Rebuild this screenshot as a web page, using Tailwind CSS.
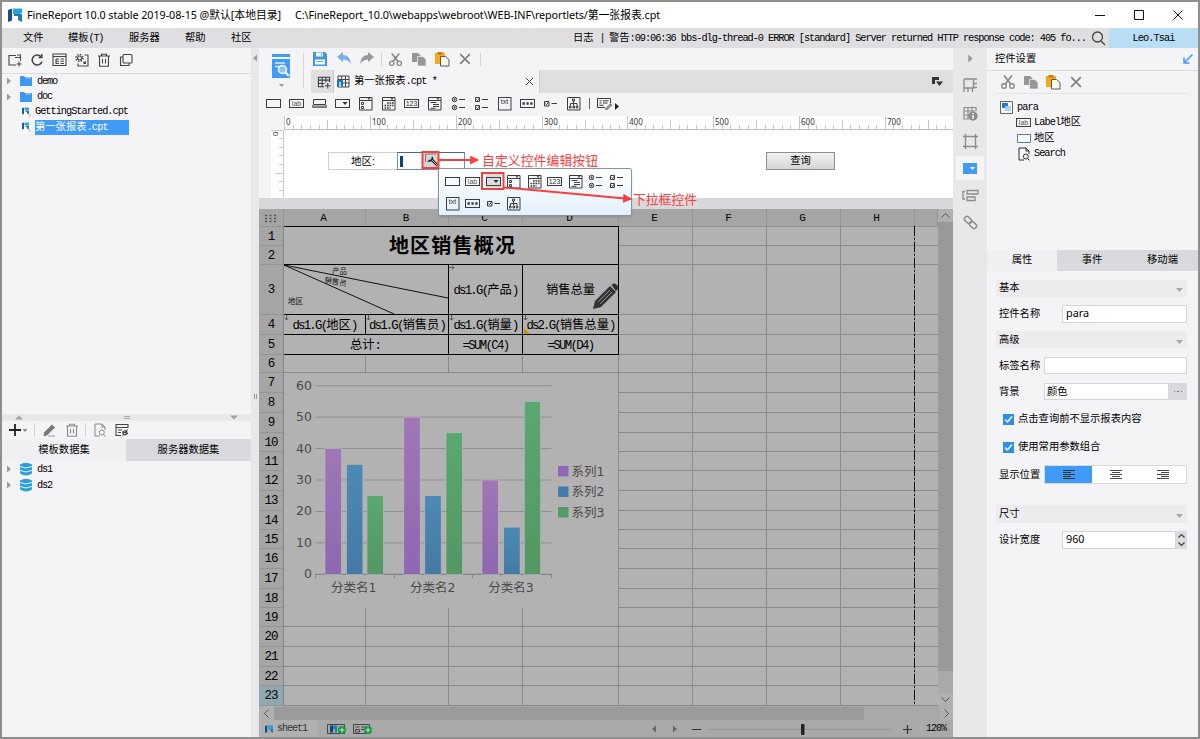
<!DOCTYPE html>
<html lang="zh-CN">
<head>
<meta charset="utf-8">
<title>FineReport</title>
<script src="https://cdn.jsdelivr.net/npm/@tailwindcss/browser@4"></script>
</head>
<body class="w-[1200px] h-[739px] overflow-hidden bg-[#8f8f8f] font-['Liberation_Sans','Noto_Sans_CJK_SC',sans-serif] text-[10.3px] leading-none text-black">
<svg class="absolute h-0 w-0">
  <defs>
    <linearGradient id="gp" x1="0" y1="0" x2="0" y2="1"><stop offset="0" stop-color="#a076b6"/><stop offset="1" stop-color="#8d68b0"/></linearGradient>
    <linearGradient id="gb" x1="0" y1="0" x2="0" y2="1"><stop offset="0" stop-color="#4c8ab5"/><stop offset="1" stop-color="#4579a6"/></linearGradient>
    <linearGradient id="gg" x1="0" y1="0" x2="0" y2="1"><stop offset="0" stop-color="#5aa871"/><stop offset="1" stop-color="#539763"/></linearGradient>
    <marker id="ah" viewBox="0 0 8 8" refX="7" refY="4" markerWidth="9" markerHeight="9" markerUnits="userSpaceOnUse" orient="auto"><path d="M0 0L8 4L0 8z" fill="#f5403f"/></marker>
  </defs>
  <symbol id="w-text" viewBox="0 0 15 15" fill="none" stroke="#3c3c3c"><rect x=".5" y="3.500" width="14" height="8"/></symbol>
  <symbol id="w-lab" viewBox="0 0 15 15" fill="none" stroke="#3c3c3c"><rect x=".5" y="3.500" width="14" height="8"/><text x="7.500" y="10" font-size="7" text-anchor="middle" fill="#555" stroke="none" font-family="Liberation Sans">lab</text></symbol>
  <symbol id="w-btn" viewBox="0 0 15 15" fill="none" stroke="#3c3c3c"><path d="M1.500 3.500h12v5h-12z"/><path d="M.5 9v2.500h14V9l-1 1h-12z" fill="#999" stroke="#777"/></symbol>
  <symbol id="w-combo" viewBox="0 0 15 15" fill="none" stroke="#3c3c3c"><rect x=".5" y="3.500" width="14" height="8"/><path d="M7.500 6h5L10 9z" fill="#333" stroke="none"/></symbol>
  <symbol id="w-list" viewBox="0 0 15 15" fill="none" stroke="#3c3c3c"><path d="M1.500 1.500h12.500v12.500h-12.500zM1.500 4.500h12.500"/><path d="M9.500 2.300h3L11 4z" fill="#333" stroke="none"/><path d="M3.500 6.500h2v2h-2zM3.500 10.500h2v2h-2z"/></symbol>
  <symbol id="w-date" viewBox="0 0 15 15" fill="none" stroke="#3c3c3c"><path d="M1.500 1.500h12.500v12.500h-12.500zM1.500 4.500h12.500"/><path d="M9.500 2.300h3L11 4z" fill="#333" stroke="none"/><path d="M6 7h7M3.500 9.500h9M3.500 12h6" stroke-width="1.700" stroke-dasharray="1.700 .8"/></symbol>
  <symbol id="w-num" viewBox="0 0 15 15" fill="none" stroke="#3c3c3c"><rect x=".5" y="3.500" width="14" height="8"/><text x="7.500" y="10" font-size="7" text-anchor="middle" fill="#333" stroke="none" font-family="Liberation Sans">123</text></symbol>
  <symbol id="w-tree" viewBox="0 0 15 15" fill="none" stroke="#3c3c3c"><path d="M1.500 1.500h12.500v12.500h-12.500zM1.500 4.500h12.500M3.500 6.500h6M6 8.500h6M6 10.500h6M3.500 12.300h5"/><path d="M9.500 2.300h3L11 4z" fill="#333" stroke="none"/></symbol>
  <symbol id="w-radio" viewBox="0 0 15 15" fill="none" stroke="#3c3c3c"><circle cx="3.500" cy="3.500" r="2.300"/><circle cx="3.500" cy="11.500" r="2.300"/><path d="M2.500 3.500h2M2.500 11.500h2" stroke-width="2"/><path d="M8 3.500h6M8 11.500h6"/></symbol>
  <symbol id="w-check" viewBox="0 0 15 15" fill="none" stroke="#3c3c3c"><path d="M1.500 1.500h4v4h-4zM1.500 9.500h4v4h-4zM2.500 3.500l1 1 2-2.500M2.500 11.500l1 1 2-2.500M8 3.500h6M8 11.500h6"/></symbol>
  <symbol id="w-txt" viewBox="0 0 15 15" fill="none" stroke="#3c3c3c"><rect x="1.500" y="1.500" width="12.500" height="12.500"/><text x="7.500" y="7.500" font-size="7" text-anchor="middle" fill="#333" stroke="none" font-family="Liberation Sans">txt</text></symbol>
  <symbol id="w-pwd" viewBox="0 0 15 15" fill="none" stroke="#3c3c3c"><rect x=".5" y="3.500" width="14" height="8"/><path d="M2.500 7.500h10.500" stroke-width="2.300" stroke-dasharray="2.300 1.600"/></symbol>
  <symbol id="w-one" viewBox="0 0 15 15" fill="none" stroke="#3c3c3c"><path d="M1.500 5.500h4.500v4.500h-4.500zM2.500 7.500l1 1.200 2-2.700M8.500 7.500h5.500"/></symbol>
  <symbol id="w-org" viewBox="0 0 15 15" fill="none" stroke="#3c3c3c"><path d="M1.500 1.500h12.500v12.500h-12.500zM6.500 3h2v2h-2zM7.500 5v4.500M4.500 9.500v-2h6.500v2M3.500 10h1.500v2h-1.500zM7 10h1.500v2H7zM10.300 10h1.500v2h-1.500z"/></symbol>
  <symbol id="w-edit" viewBox="0 0 15 15" fill="none" stroke="#3c3c3c"><path d="M8 11.500h-7.500v-9h13v5M2.500 4.800h2M6 4.800h5.500M2.500 7h2M6 7h4.500M2.500 9.300h4M8.500 13l5-5 1 1-5 5z"/></symbol>
  <symbol id="grid-new" viewBox="0 0 15 15" fill="none" stroke="#3c3c3c"><path d="M1.500 2.500h12v5M1.500 2v10.500h6M1.500 5.500h12M1.500 9h6.500M5.500 2v10.500M9.500 2v6M11.500 8.500v6M8.500 11.500h6" stroke-width="1.100"/></symbol>
  <symbol id="fr" viewBox="0 0 14 14"><path d="M0 2l4-1.500v12L0 14z" fill="#164f8a"/><path d="M5 .5h9v4.500l-3 1H5z" fill="#29a3dd"/><path d="M6 6h8v8l-4-2V8H6z" fill="#1f78b8"/></symbol>
  <symbol id="cpt" viewBox="0 0 12 12"><path d="M1 0h10v8l-3 4H1z" fill="#fff"/><path d="M2 2l2-.5V8l-2 .5z" fill="#1c5f9e"/><path d="M4.500 1.500H9V4H4.500z" fill="#29a3dd"/><path d="M5.500 4.500H9V8.500L7 7.500V6H5.500z" fill="#1f78b8"/><path d="M8 10.500l2.500-2.500v1.500l-1 1z" fill="#aaa"/></symbol>
  <symbol id="folder" viewBox="0 0 14 12"><path d="M1 1h4l1 1h7v9H1z" fill="#3b97f0"/><path d="M6 2.200h6.500l-1 1.300H7z" fill="#9fcdfb"/></symbol>
  <symbol id="scis" viewBox="0 0 16 16"><g fill="none" stroke="#8a8a8a" stroke-width="1.400"><circle cx="4" cy="12" r="2.300"/><circle cx="12" cy="12" r="2.300"/><path d="M4 1.500l6.700 8.500M12 1.500L5.300 10" stroke-width="1.800"/></g></symbol>
  <symbol id="copy" viewBox="0 0 16 16"><path d="M1 2h6l2.500 2.500V11H1z" fill="#969696"/><path d="M6.500 5.500H12l3 3V15H6.500z" fill="#969696" stroke="#f4f4f7" stroke-width=".7"/></symbol>
  <symbol id="paste" viewBox="0 0 16 16"><path d="M1 2h10v11H1z" fill="#f3a81d"/><path d="M3.500 1h5v2.500h-5z" fill="#c97f0c"/><path d="M6.500 5.500h5l3.500 3V15H6.500z" fill="#fffbea" stroke="#5a5a5a"/></symbol>
  <symbol id="xx" viewBox="0 0 16 16"><path d="M2.500 2.500l11 11M13.500 2.500l-11 11" stroke="#7e7e7e" stroke-width="1.900"/></symbol>
  <symbol id="db" viewBox="0 0 14 14"><path d="M1 2.500Q7-1 13 2.500V11.500Q7 15.500 1 11.500z" fill="#2a9fdc"/><path d="M1 4.500q6 3 12 0M1 8.500q6 3 12 0" stroke="#e8f5fd" fill="none"/></symbol>
  <symbol id="tri" viewBox="0 0 6 8"><path d="M1 0.500l4 3.500-4 3.500z" fill="#9b9b9b"/></symbol>
  <symbol id="trid" viewBox="0 0 8 5"><path d="M0 .5h8L4 4.500z" fill="#a2a2a2"/></symbol>
  <symbol id="trash" viewBox="0 0 14 14"><path d="M1 3h12M4.500 3V1.200h5V3M2.500 3v10.200h9V3M5.500 6v4.500M8.500 6v4.500" fill="none" stroke="currentColor" stroke-width="1.100"/></symbol>
  <symbol id="prev" viewBox="0 0 14 14"><path d="M7 13H2V1h7l3 3v3M9 1v3h3M10.500 11.500l2 2" fill="none" stroke="currentColor"/><circle cx="8.800" cy="9.500" r="2.500" fill="none" stroke="currentColor"/></symbol>
</svg>

<div class="flex flex-col w-[1196px] h-[735px] ml-[2px] mt-[2px] bg-[#f4f4f7]">
  <!-- title bar -->
  <header class="flex h-[26px] shrink-0 items-center bg-white font-['Noto_Sans','Noto_Sans_CJK_SC',sans-serif] text-[10.8px]">
    <svg class="ml-[6px] size-[14px]"><use href="#fr"/></svg>
    <div class="ml-[5px] w-[268px]"><span data-w="254" class="whitespace-nowrap">FineReport 10.0 stable 2019-08-15 @默认[本地目录]</span></div>
    <span data-w="365" class="whitespace-nowrap">C:\FineReport_10.0\webapps\webroot\WEB-INF\reportlets/第一张报表.cpt</span>
    <svg class="ml-auto mr-[14px] h-[12px] w-[90px]" fill="none" stroke="#111"><path d="M1 6.500h10M40.500 1.500h9v9h-9zM79.500 1.500l9 9M88.500 1.500l-9 9"/></svg>
  </header>
  <!-- menu bar -->
  <nav class="flex h-[20px] shrink-0 items-center bg-[#dfdfe1] font-['Liberation_Mono','Noto_Sans_CJK_SC',monospace] whitespace-nowrap">
    <span class="ml-[21px] w-[45px]">文件</span><div class="w-[61px]"><span data-w="35">模板(T)</span></div><span class="w-[56px]">服务器</span><span class="w-[46px]">帮助</span><span>社区</span>
    <span class="ml-auto w-[36px]">日志<span class="ml-[6px]">|</span></span><div class="w-[482px]"><span data-w="477">警告:09:06:36 bbs-dlg-thread-0 ERROR [standard] Server returned HTTP response code: 405 fo...</span></div>
    <svg class="h-[16px] w-[18px]" fill="none" stroke="#444" stroke-width="1.300"><circle cx="6.500" cy="7" r="5"/><path d="M10 11l4 4"/></svg>
    <div class="flex h-full w-[89px] items-center justify-center bg-[#b8ddf5]"><span data-w="42">Leo.Tsai</span></div>
  </nav>

  <div class="flex min-h-0 flex-1">
    <!-- left side -->
    <aside class="flex w-[249px] shrink-0 flex-col">
      <div class="flex h-[26px] shrink-0 items-center gap-[8px] border-b border-[#dcdcdf] pb-[2px] pl-[6px] text-[#444]">
        <svg class="size-[14px]" viewBox="0 0 14 14" fill="none" stroke="currentColor" stroke-width="1.100"><path d="M8 12H1V2.500h7M7 4.500h5.500v3M9 2h3.500v2M11 8.500v5M8.500 11h5"/></svg>
        <svg class="size-[14px]" viewBox="0 0 14 14" fill="none" stroke="currentColor" stroke-width="1.500"><path d="M12 8.500a5 5 0 1 1-1.200-5M11.800 1v3.500H8.500"/></svg>
        <svg class="size-[15px]" viewBox="0 0 15 15" fill="none" stroke="currentColor" stroke-width="1.100"><path d="M1 2h13v11.500H1zM1 4.500h13M4 7h3M4 7v4.500h3M4 9.300h3M8.500 7h3.500M8.500 9.300h3.500M8.500 11.500h3.500"/></svg>
        <svg class="size-[14px]" viewBox="0 0 14 14" fill="none" stroke="currentColor" stroke-width="1.100"><circle cx="4.500" cy="5" r="2"/><circle cx="4.500" cy="5" r="3.500" stroke-width="1.500" stroke-dasharray="1.400 1.350"/><path d="M9.500 2h3.500v11H3v-2.500M9 10.500l2-2M9 8.500v2h2"/></svg>
        <svg class="size-[14px]"><use href="#trash"/></svg>
        <svg class="size-[14px]" viewBox="0 0 14 14" fill="none" stroke="currentColor" stroke-width="1.100"><rect x="4" y="1.500" width="9" height="8.500" rx="1"/><path d="M4 4H1.500v8.500H10V10"/></svg>
      </div>
      <div class="flex h-[340px] shrink-0 flex-col font-['Liberation_Mono','Noto_Sans_CJK_SC',monospace]">
        <div class="flex h-[14px] items-center pl-[4px]"><svg class="h-[8px] w-[6px]"><use href="#tri"/></svg><svg class="ml-[7px] h-[12px] w-[14px]"><use href="#folder"/></svg><span data-w="20" class="ml-[4px]">demo</span></div>
        <div class="mt-[1px] flex h-[15px] items-center pl-[4px]"><svg class="h-[8px] w-[6px]"><use href="#tri"/></svg><svg class="ml-[7px] h-[12px] w-[14px]"><use href="#folder"/></svg><span data-w="15" class="ml-[4px]">doc</span></div>
        <div class="flex h-[15px] items-center pl-[18px]"><svg class="size-[12px]"><use href="#cpt"/></svg><span data-w="93" class="ml-[3px]">GettingStarted.cpt</span></div>
        <div class="flex h-[16px] items-center pl-[18px]"><svg class="size-[12px]"><use href="#cpt"/></svg><div class="ml-[3px] flex h-[15px] w-[94px] items-center bg-[#3f9bf7] text-white"><span data-w="73">第一张报表.cpt</span></div></div>
      </div>
      <div class="flex h-[7px] shrink-0 items-center justify-between bg-[#e8e8ea] px-[13px]">
        <svg class="h-[5px] w-[8px] rotate-180"><use href="#trid"/></svg><span class="h-[3px] w-[6px] border-y border-[#aaa]"></span><svg class="h-[5px] w-[8px]"><use href="#trid"/></svg>
      </div>
      <div class="flex h-[18px] shrink-0 items-center pl-[6px] text-[#555]">
        <svg class="h-[14px] w-[20px]"><path d="M1 7h12M7 1v12" stroke="#222" stroke-width="1.800"/><path d="M14.500 6h5l-2.500 3z" fill="#888"/></svg>
        <i class="ml-[6px] h-[14px] w-px bg-[#d5d5d5]"></i>
        <svg class="ml-[8px] size-[14px]" viewBox="0 0 14 14" fill="#777"><path d="M1 9.500L9 1.500l3 3-8 8-3.500.8z"/><path d="M5 13h7" stroke="#999"/></svg>
        <svg class="ml-[8px] size-[14px] text-[#8a8a8a]"><use href="#trash"/></svg>
        <i class="ml-[6px] h-[14px] w-px bg-[#d5d5d5]"></i>
        <svg class="ml-[7px] size-[14px] text-[#888]"><use href="#prev"/></svg>
        <svg class="ml-[8px] size-[14px]" viewBox="0 0 14 14" fill="none" stroke="#444" stroke-width="1.100"><path d="M6 12.500H1v-11h12V5M1 4.500h12M3 7h4M3 9.500h3M12.500 6.500L7.500 12.500M7 9l6 1.500"/><circle cx="10" cy="9.800" r="2"/></svg>
      </div>
      <div class="flex h-[22px] shrink-0"><div class="flex w-[124px] items-center justify-center bg-[#f0f0f3]">模板数据集</div><div class="flex flex-1 items-center justify-center bg-[#d8d9dd]">服务器数据集</div></div>
      <div class="font-['Liberation_Mono',monospace]">
        <div class="flex h-[16px] items-center pl-[4px]"><svg class="h-[8px] w-[6px]"><use href="#tri"/></svg><svg class="ml-[7px] size-[14px]"><use href="#db"/></svg><span data-w="15" class="ml-[4px]">ds1</span></div>
        <div class="flex h-[16px] items-center pl-[4px]"><svg class="h-[8px] w-[6px]"><use href="#tri"/></svg><svg class="ml-[7px] size-[14px]"><use href="#db"/></svg><span data-w="15" class="ml-[4px]">ds2</span></div>
      </div>
    </aside>
    <div class="flex w-[8px] shrink-0 flex-col items-center bg-[#e8e8ea] pt-[6px]"><svg class="h-[8px] w-[6px] rotate-180"><use href="#tri"/></svg><i class="mt-[332px] h-[5px] w-[3px] border-x border-[#999]"></i></div>

    <!-- designer -->
    <main class="flex w-[694px] shrink-0 flex-col">
      <div class="flex h-[45px] shrink-0">
        <div class="flex w-[44px] flex-col items-center pt-[5px]">
          <svg class="h-[26px] w-[20px]" viewBox="0 0 20 26"><path d="M1 1h18v3H1zM1 6h18v19H1z" fill="#3f9bf7"/><path d="M4 10h10M4 13.500h5" stroke="#d8ebff" stroke-width="1.500"/><circle cx="11.500" cy="16.500" r="4" fill="#8cc3fa" stroke="#fff" stroke-width="1.500"/><path d="M14.500 19.500l3.500 3.500" stroke="#fff" stroke-width="2"/></svg>
          <svg class="mt-[5px] h-[3px] w-[5px]"><path d="M0 0h5L2.500 3z" fill="#999"/></svg>
        </div>
        <i class="mt-[5px] h-[35px] w-px bg-[#d8d8da]"></i>
        <div class="flex flex-1 flex-col pl-[7px]">
          <div class="flex h-[22px] items-center">
            <svg class="ml-[1px] size-[16px]" viewBox="0 0 16 16"><path d="M1 1h12l2 2v12H1z" fill="#4794dd"/><path d="M4 1.500h7v4H4zM3 8.500h10v5H3z" fill="#f4f8fd"/><path d="M9 2.500h1v2H9zM4.500 10.200h7v.8h-7z" fill="#4794dd"/></svg>
            <svg class="ml-[8px] size-[16px]" viewBox="0 0 16 16"><path d="M1 6l6-5v3q7 0 8 9-3-4.500-8-4.500V11z" fill="#79b0e8"/></svg>
            <svg class="ml-[7px] size-[16px]" viewBox="0 0 16 16"><path d="M15 6L9 1v3q-7 0-8 9 3-4.500 8-4.500V11z" fill="#999"/></svg>
            <i class="ml-[6px] h-[13px] w-px bg-[#d5d5d5]"></i>
            <svg class="ml-[6px] size-[15px]"><use href="#scis"/></svg><svg class="ml-[8px] size-[16px]"><use href="#copy"/></svg><svg class="ml-[7px] size-[16px]"><use href="#paste"/></svg><svg class="ml-[8px] size-[14px]"><use href="#xx"/></svg>
            <i class="ml-[8px] h-[13px] w-px bg-[#d5d5d5]"></i>
          </div>
          <div class="flex h-[23px] items-stretch bg-[#dfdfe1]">
            <div class="flex w-[23px] items-center justify-center border-r border-[#c8c8ca] pl-[3px]"><svg class="size-[14px]"><use href="#grid-new"/></svg></div>
            <div class="flex w-[206px] items-center border-r border-[#ccc] bg-[#f4f4f7] pl-[3px] font-['Liberation_Mono','Noto_Sans_CJK_SC',monospace]"><svg class="size-[13px]" viewBox="0 0 13 13"><path d="M1 1h11v11H1zM1 4.500h11M1 8h11M4.700 1v11M8.500 1v11" fill="none" stroke="#444"/><path d="M0 5h6v7H0z" fill="#1f78b8"/><path d="M2 7h2v5H2z" fill="#9fd0f5"/></svg><span data-w="83" class="ml-[4px]">第一张报表.cpt *</span><svg class="mr-[6px] ml-auto size-[7px]" stroke="#444"><path d="M0 0l7 7M7 0l-7 7"/></svg></div>
            <svg class="mr-[10px] ml-auto mt-[7px] size-[11px]" viewBox="0 0 11 11"><path d="M0 0h7v3H3v4H0zM4 4.500h7L7.500 9z" fill="#333"/></svg>
          </div>
        </div>
      </div>
      <!-- widget bar -->
      <div class="flex h-[23px] shrink-0 items-center gap-[8.150px] pb-[2px] pl-[6.500px]">
        <svg class="size-[15px]"><use href="#w-text"/></svg><svg class="size-[15px]"><use href="#w-lab"/></svg><svg class="size-[15px]"><use href="#w-btn"/></svg><svg class="size-[15px]"><use href="#w-combo"/></svg><svg class="size-[15px]"><use href="#w-list"/></svg><svg class="size-[15px]"><use href="#w-date"/></svg><svg class="size-[15px]"><use href="#w-num"/></svg><svg class="size-[15px]"><use href="#w-tree"/></svg><svg class="size-[15px]"><use href="#w-radio"/></svg><svg class="size-[15px]"><use href="#w-check"/></svg><svg class="size-[15px]"><use href="#w-txt"/></svg><svg class="size-[15px]"><use href="#w-pwd"/></svg><svg class="size-[15px]"><use href="#w-one"/></svg><svg class="size-[15px]"><use href="#w-org"/></svg>
        <i class="h-[11px] w-px bg-[#666]"></i><svg class="-ml-[2px] size-[15px]"><use href="#w-edit"/></svg><svg class="-ml-[5px] mt-[6px] h-[7px] w-[4px]"><path d="M0 0l4 3.500L0 7z" fill="#222"/></svg>
      </div>
      <!-- rulers and parameter pane -->
      <svg id="ruler" class="h-[14px] w-[694px] shrink-0" viewBox="259 116 694 14"></svg>
      <div class="flex h-[68px] shrink-0">
        <svg class="h-[68px] w-[25px] shrink-0" viewBox="0 0 25 68" stroke="#cacaca"><path d="M12 0h13v68H12z" fill="#fff" stroke="none"/><path d="M12 .5h13M24.500 0v68M20 8.500h4M20 17.500h4M20 25.500h4M20 34.500h4M16 43.500h8M20 51.500h4M20 60.500h4"/><text transform="translate(19 6) rotate(-90)" font-size="8" stroke="none" fill="#333">0</text></svg>
        <div class="flex flex-1 items-start bg-white pt-[22px] pl-[44px]">
          <div class="flex h-[18px] w-[69px] items-center justify-center border border-r-0 border-[#d0d0d0] text-[10.500px]">地区:</div>
          <div class="flex h-[18px] w-[68px] items-center border border-[#6d8cc0] border-t-[#44669c] pl-[2px]"><i class="h-[11px] w-[3px] bg-[#0c4276]"></i></div>
          <div class="ml-[301px] flex h-[18px] w-[69px] items-center justify-center border border-[#8c8c8c] bg-linear-to-b from-[#f1f1f1] to-[#d6d6d6]">查询</div>
        </div>
      </div>
      <div class="h-[11px] shrink-0 bg-[#d8d8da]"></div>
      <!-- sheet -->
      <div class="flex h-[497px] shrink-0">
        <div id="sheet" class="grid w-[679px] shrink-0 grid-cols-[25px_82px_83px_74px_96px_74px_74px_74px_74px_23px] grid-rows-[18px_19px_19px_50px_20px_20px_18px_20px_20px_20px_19px_19px_20px_20px_19px_19px_20px_20px_19px_19px_20px_20px_19px_20px] bg-[#b2b2b2] font-['Liberation_Mono','Noto_Sans_CJK_SC',monospace] text-[12.300px] whitespace-nowrap">
        </div>
        <div class="flex w-[15px] flex-col bg-[#a9a9a9]">
          <div class="flex h-[13px] items-center justify-center bg-[#b0b0b0]"><svg class="h-[5px] w-[9px]" fill="none" stroke="#555"><path d="M.5 4.500l4-4 4 4"/></svg></div>
          <div class="h-[449px] bg-[#999]"></div>
          <div class="mt-auto flex h-[13px] items-center justify-center bg-[#b0b0b0]"><svg class="h-[5px] w-[9px]" fill="none" stroke="#555"><path d="M.5 .5l4 4 4-4"/></svg></div>
        </div>
      </div>
      <div class="flex h-[14px] shrink-0 items-center bg-[#a9a9a9]">
        <div class="flex h-full w-[15px] items-center justify-center bg-[#b0b0b0]"><svg class="h-[9px] w-[5px]" fill="none" stroke="#555"><path d="M4.500 .5l-4 4 4 4"/></svg></div>
        <div class="h-[13px] w-[590px] bg-[#9b9b9b]"></div>
        <div class="ml-auto flex h-full w-[13px] items-center justify-center bg-[#b0b0b0]"><svg class="h-[9px] w-[5px]" fill="none" stroke="#555"><path d="M.5 .5l4 4-4 4"/></svg></div>
      </div>
      <div class="flex flex-1 items-center bg-[#a9a9a9] font-['Liberation_Mono',monospace] text-[10px] text-[#333]">
        <div class="flex h-full w-[58px] items-center bg-[#b0b0b0] pl-[6px]"><svg class="size-[8px]"><use href="#fr"/></svg><span data-w="30" class="ml-[4px]">sheet1</span></div>
        <svg class="ml-[10px] h-[13px] w-[46px]" viewBox="0 0 46 13" fill="none" stroke="#444"><path d="M.5 2.500h17v9H.5zM26.500 2.500h16v9h-16zM28.500 5h4M34 5h5M28.500 7.500h4v2.500h-4zM34 7.500h4"/><path d="M3 3.500h3v7H3z" fill="#0b4680" stroke="none"/><path d="M6 3.500h4v7H8V7H6z" fill="#1d7fc0" stroke="none"/><circle cx="15" cy="8" r="4" fill="#16963c" stroke="none"/><circle cx="41" cy="8" r="4" fill="#16963c" stroke="none"/><path d="M12.500 8h5M15 5.500v5M38.500 8h5M41 5.500v5" stroke="#e0e0e0"/></svg>
        <svg class="ml-auto h-[12px] w-[266px]" viewBox="0 0 266 12"><path d="M6 2.500v7L2 6zM23 2.500v7L27 6z" fill="#666"/><path d="M42 6.500h9M253 6.500h9M257.500 2v9" stroke="#333" stroke-width="1.200"/><path d="M57 6.500h184" stroke="#999"/><rect x="151" y="1" width="3.500" height="11" rx="1" fill="#222"/></svg>
        <span data-w="20" class="mr-[7px] ml-[10px] text-black">120%</span>
      </div>
    </main>

    <!-- right icon strip -->
    <div class="flex w-[34px] shrink-0 flex-col items-center bg-[#e8e8ea] text-[#8c8c8c]">
      <svg class="mt-[6px] h-[9px] w-[7px]" viewBox="0 0 6 8"><use href="#tri"/></svg>
      <svg class="mt-[15px] size-[15px]" viewBox="0 0 15 15" fill="none" stroke="currentColor" stroke-width="1.300"><path d="M1 1h13M1 1v13M1 10h9.500V1M14 5.500h-3.500M14 9.500h-3.500M5 10v4M9.500 10v4"/></svg>
      <svg class="mt-[13px] size-[15px]" viewBox="0 0 15 15" fill="none" stroke="currentColor" stroke-width="1.200"><path d="M6 13H1V1.500h12V5M1 5h11M1 9h5M5 1.500v11M9 1.500v4"/><circle cx="10" cy="10" r="4.700" fill="#8c8c8c" stroke="none"/><path d="M10 9.200v3.500M10 7v1.300" stroke="#fff" stroke-width="1.500"/></svg>
      <svg class="mt-[13px] size-[15px]" viewBox="0 0 15 15" fill="none" stroke="currentColor" stroke-width="1.400"><path d="M2.500 0v15M12.500 0v15M0 2.500h15M0 12.500h15"/></svg>
      <div class="mt-[7px] flex h-[24px] w-[28px] items-center justify-center bg-[#f4f4f7]"><svg class="h-[11px] w-[14px]"><path d="M0 0h14v11H0z" fill="#3f9bf7"/><path d="M7 4h5L9.500 7z" fill="#fff"/></svg></div>
      <svg class="mt-[9px] h-[13px] w-[17px]" viewBox="0 0 17 13" fill="none" stroke="currentColor" stroke-width="1.300"><path d="M5 1.500h11v3.500H5zM5 8h8v3.500H5zM3 2.500H1v7.500h2"/></svg>
      <svg class="mt-[13px] size-[15px]" viewBox="0 0 15 15" fill="none" stroke="currentColor" stroke-width="1.500"><rect x="-4" y="-2.500" width="8" height="5" rx="2.500" transform="translate(5 5) rotate(45)"/><rect x="-4" y="-2.500" width="8" height="5" rx="2.500" transform="translate(10 10) rotate(45)"/></svg>
    </div>

    <!-- property panel -->
    <aside class="flex flex-1 flex-col">
      <div class="flex h-[23px] shrink-0 items-center justify-between border-b border-[#dcdcdf] pr-[5px] pl-[8px]"><span>控件设置</span><svg class="size-[10px]" fill="none" stroke="#3f9bf7" stroke-width="1.500"><path d="M9.500 .5L1.500 8.500M1 3.500v5.500h5.500"/></svg></div>
      <div class="mx-[9px] flex h-[23px] shrink-0 items-center border-b border-[#e4e4e6] pl-[4px]"><svg class="size-[16px]"><use href="#scis"/></svg><svg class="ml-[7px] size-[16px]"><use href="#copy"/></svg><svg class="ml-[6px] size-[16px]"><use href="#paste"/></svg><svg class="ml-[8px] size-[14px]"><use href="#xx"/></svg></div>
      <div class="h-[156px] shrink-0 pt-[5px] font-['Liberation_Mono','Noto_Sans_CJK_SC',monospace]">
        <div class="flex h-[16px] items-center pl-[13px]"><svg class="size-[13px]"><path d="M.5 .5h12v12H.5z" fill="#fff" stroke="#666"/><path d="M2 2h6v5H2z" fill="#1d80c4"/><path d="M5 5h6v5H5z" fill="#a9cdf5" opacity=".9"/></svg><span data-w="21" class="ml-[4px]">para</span></div>
        <div class="flex h-[15px] items-center pl-[29px]"><svg class="size-[15px]"><use href="#w-lab"/></svg><span data-w="47" class="ml-[3px]">Label地区</span></div>
        <div class="flex h-[16px] items-center pl-[30px]"><svg class="h-[9px] w-[14px]"><path d="M.5 .5h13v8H.5z" fill="#fff" stroke="#5b79b4"/></svg><span class="ml-[3px]">地区</span></div>
        <div class="flex h-[15px] items-center pl-[30px]"><svg class="size-[14px] text-[#333]"><use href="#prev"/></svg><span data-w="31" class="ml-[3px]">Search</span></div>
      </div>
      <div class="flex h-[21px] shrink-0"><div class="flex w-[70px] items-center justify-center bg-[#f0f0f3]">属性</div><div class="flex w-[70px] items-center justify-center bg-[#d8d9dd]">事件</div><div class="flex flex-1 items-center justify-center bg-[#d8d9dd]">移动端</div></div>
      <div class="flex flex-col px-[9px] pt-[9px] pr-[11px]">
        <div class="flex h-[17px] items-center justify-between bg-[#ececee] pr-[4px] pl-[3px]">基本<svg class="mt-[3px] h-[4px] w-[7px]"><path d="M0 0h7L3.500 4z" fill="#aaa"/></svg></div>
        <div class="mt-[8px] flex h-[18px] items-center"><span class="w-[66px] pt-px pl-[3px]">控件名称</span><div class="flex h-[18px] flex-1 items-center border border-[#d6d6da] bg-white pb-px pl-[3px] font-['Noto_Sans'] text-[10.800px]">para</div></div>
        <div class="mt-[8px] flex h-[17px] items-center justify-between bg-[#ececee] pt-px pr-[4px] pl-[3px]">高级<svg class="mt-[3px] h-[4px] w-[7px]"><path d="M0 0h7L3.500 4z" fill="#aaa"/></svg></div>
        <div class="mt-[9px] flex h-[17px] items-center"><span class="w-[48px] pt-px pl-[3px]">标签名称</span><div class="h-[17px] flex-1 border border-[#d6d6da] bg-white"></div></div>
        <div class="mt-[9px] flex h-[17px] items-center"><span class="w-[48px] pt-px pl-[3px]">背景</span><div class="flex h-[17px] flex-1 items-center border border-[#d6d6da] bg-white pt-px pl-[2px]">颜色</div><div class="flex h-[17px] w-[18px] items-center justify-center gap-[2px] bg-[#d8d9dd]"><i class="size-[1.500px] bg-[#777]"></i><i class="size-[1.500px] bg-[#777]"></i><i class="size-[1.500px] bg-[#777]"></i></div></div>
        <div class="mt-[11px] flex h-[16px] items-center pl-[7px]"><svg class="mr-[4px] size-[11px]"><path d="M0 0h11v11H0z" fill="#2e8fea"/><path d="M2 5.500l2.500 2.500 4.500-5.500" fill="none" stroke="#fff" stroke-width="1.400"/></svg>点击查询前不显示报表内容</div>
        <div class="mt-[12px] flex h-[16px] items-center pl-[7px]"><svg class="mr-[4px] size-[11px]"><path d="M0 0h11v11H0z" fill="#2e8fea"/><path d="M2 5.500l2.500 2.500 4.500-5.500" fill="none" stroke="#fff" stroke-width="1.400"/></svg>使用常用参数组合</div>
        <div class="mt-[10px] flex h-[19px] items-center"><span class="w-[48px] pt-px pl-[3px]">显示位置</span>
          <div class="flex h-[19px] flex-1 items-stretch border border-[#d9d9dc] bg-white">
            <div class="flex w-[47px] items-center justify-center bg-[#3f9bf7]"><svg class="h-[10px] w-[12px]" stroke="#333"><path d="M0 .5h12M0 2.500h8M0 4.500h12M0 6.500h8M0 8.500h12"/></svg></div>
            <div class="flex w-[47px] items-center justify-center"><svg class="h-[10px] w-[12px]" stroke="#444"><path d="M0 .5h12M2 2.500h8M0 4.500h12M2 6.500h8M0 8.500h12"/></svg></div>
            <div class="flex w-[47px] items-center justify-center"><svg class="h-[10px] w-[12px]" stroke="#444"><path d="M0 .5h12M4 2.500h8M0 4.500h12M4 6.500h8M0 8.500h12"/></svg></div>
          </div></div>
        <div class="mt-[21px] flex h-[18px] items-center justify-between bg-[#ececee] pr-[4px] pl-[3px]">尺寸<svg class="mt-[3px] h-[4px] w-[7px]"><path d="M0 0h7L3.500 4z" fill="#aaa"/></svg></div>
        <div class="mt-[8px] flex h-[18px] items-center"><span class="w-[66px] pt-px pl-[3px]">设计宽度</span><div class="flex h-[18px] flex-1 items-center border border-[#d6d6da] bg-white pb-px pl-[3px] font-['Noto_Sans'] text-[10.800px]">960</div><div class="flex h-[18px] w-[11px] flex-col items-center justify-center gap-[4px] bg-[#dcdce0]"><svg class="h-[4px] w-[7px]" fill="none" stroke="#444" stroke-width="1.200"><path d="M.5 3.500l3-3 3 3"/></svg><svg class="h-[4px] w-[7px]" fill="none" stroke="#444" stroke-width="1.200"><path d="M.5 .5l3 3 3-3"/></svg></div></div>
      </div>
    </aside>
  </div>
</div>

<!-- floating widget chooser -->
<div class="absolute top-[168px] left-[438px] h-[48px] w-[194px] rounded-[2px] border border-[#8295a0] bg-linear-to-b from-white to-[#e3f1fb] pt-[5px] pl-[5.500px] shadow">
  <div class="flex gap-[5.550px]"><svg class="size-[15px]"><use href="#w-text"/></svg><svg class="size-[15px]"><use href="#w-lab"/></svg><svg class="size-[15px] bg-[#ddd]"><use href="#w-combo"/></svg><svg class="size-[15px]"><use href="#w-list"/></svg><svg class="size-[15px]"><use href="#w-date"/></svg><svg class="size-[15px]"><use href="#w-num"/></svg><svg class="size-[15px]"><use href="#w-tree"/></svg><svg class="size-[15px]"><use href="#w-radio"/></svg><svg class="size-[15px]"><use href="#w-check"/></svg></div>
  <div class="mt-[7px] flex gap-[5.550px]"><svg class="size-[15px]"><use href="#w-txt"/></svg><svg class="size-[15px]"><use href="#w-pwd"/></svg><svg class="size-[15px]"><use href="#w-one"/></svg><svg class="size-[15px]"><use href="#w-org"/></svg></div>
</div>
<!-- callouts -->
<svg class="absolute top-[145px] left-[400px] h-[75px] w-[310px]" viewBox="400 145 310 75" fill="none">
  <path d="M423 153h15v14h-15z" fill="#d5d5d5"/>
  <path d="M425.500 161.500v-7.500h11M427 161.500h3" stroke="#777"/>
  <path d="M431 159l6.500 6.500" stroke="#222" stroke-width="2.600"/><path d="M431 159l6.500 6.500" stroke="#ddd" stroke-width=".8"/><path d="M428.500 160.500l2 .5 2.200-2.200-.7-2" stroke="#222" stroke-width="1.300"/>
  <g stroke="#f5403f" stroke-width="2"><path d="M422.500 152h16v16h-16zM482 173h21.500v16H482z"/><path d="M439 160h39" marker-end="url(#ah)"/><path d="M504 187.500L631 199" marker-end="url(#ah)"/></g>
  <g fill="#f5403f" font-family="Noto Sans CJK SC" font-size="12.800"><text x="482" y="165" textLength="116">自定义控件编辑按钮</text><text x="633" y="204" textLength="64">下拉框控件</text></g>
</svg>
<!-- page break guide -->
<svg class="absolute top-[226px] left-[914px] h-[480px] w-[2px]"><path d="M.5 0v480" stroke="#111" stroke-dasharray="10 2 2 2"/></svg>

<template id="t-diag"><svg class="block h-[49px] w-[164px]" viewBox="284 265 164 49" stroke="#111" fill="none"><path d="M284 265L448 298M284 265L394 314"/><g stroke="none" fill="#111" font-size="7.500" font-family="Noto Sans CJK SC"><text x="332" y="274">产品</text><text x="324" y="282" transform="rotate(12 324 282)">销售员</text><text x="288" y="304">地区</text></g></svg></template>
<template id="t-chart"><svg class="block h-[235px] w-[334px]" viewBox="284 373 334 235" font-family="DejaVu Sans, Noto Sans CJK SC" fill="#4a4a4a"></svg></template>
<template id="t-total"><span>销售总量</span><svg class="absolute top-[18px] right-[-1px] size-[27px]" viewBox="0 0 27 27"><path d="M1 26l2-8L18 3l6 6L9 24z" fill="#333"/><path d="M19.500 2l2-1.500q2-.5 4 2t0 4l-1.500 1.500z" fill="#333"/><path d="M6 19L18 7M8 21L20 9" stroke="#aaa" stroke-width=".8"/></svg></template>
<script>
const sheet = document.getElementById('sheet');
function cell(r, c, html, cls, rs = 1, cs = 1) {
  const d = document.createElement('div');
  d.className = cls;
  d.style.gridArea = `${r}/${c}/span ${rs}/span ${cs}`;
  d.innerHTML = html;
  sheet.appendChild(d);
}
const HEAD = 'flex items-center justify-center bg-[#a5a5a5] border-r border-b border-[#949494] pt-[2px] pr-[2px] text-[11px] text-black';
const ROWH = 'flex items-center justify-center bg-[#a5a5a5] border-r border-b border-r-[#858585] border-b-[#959595] pt-[2px] text-[12.5px] tracking-[-1px] text-black';
const ROWSEL = 'flex items-center justify-center bg-[#8fa8b1] border-r border-b border-r-[#858585] border-b-[#959595] pt-[2px] text-[12.5px] tracking-[-1px] text-black';
const PLAIN = 'border-r border-b border-[#8b8b8b]';
const LAST = 'border-b border-[#8b8b8b]';
const V = 'border-r border-[#8b8b8b]';
const BLACK = 'relative flex items-center justify-center border-r border-b border-black pt-[3px] text-black';
const dots = '<svg class="h-[10px] w-[12px]"><path d="M1 1.500h11M1 4.500h11M1 7.500h11" stroke="#555" stroke-width="1.500" stroke-dasharray="2 2.500"/></svg>';
cell(1, 1, dots, HEAD);
['A','B','C','D','E','F','G','H',''].forEach((t, i) => cell(1, i + 2, t, HEAD));
for (let r = 1; r <= 23; r++) {
  cell(r + 1, 1, r, r === 23 ? ROWSEL : ROWH);
  for (let c = 2; c <= 10; c++) {
    if (c <= 5 && (r <= 5 || (r >= 7 && r <= 18))) continue;
    cell(r + 1, c, '', c === 10 ? LAST : PLAIN);
  }
}
const T = id => document.getElementById(id).innerHTML;
const arr = '<svg class="absolute top-0 left-0 size-[6px]" fill="none" stroke="#444" stroke-width=".8"><path d="M2.500 0v5M.5 3l2 2 2-2"/></svg>';
const arrR = '<svg class="absolute top-0 left-0 size-[6px]" fill="none" stroke="#444" stroke-width=".8"><path d="M0 2.500h5M3 .5l2 2-2 2"/></svg>';
const flag = '<svg class="absolute bottom-0 left-[1px] size-[6px]"><path d="M0 0l6 6H0z" fill="#c8960c"/></svg>';
cell(2, 2, '<span class="pt-[2px] pl-[3px] text-[20px] font-semibold tracking-[1.2px]">地区销售概况</span>', 'relative flex items-center justify-center border-t border-r border-b border-black pt-[2px] -mt-px text-black', 2, 4);
cell(4, 2, T('t-diag'), 'border-r border-b border-black', 1, 2);
cell(4, 4, arrR + '<span data-w="64">ds1.G(产品)</span>', BLACK);
cell(4, 5, T('t-total'), BLACK);
cell(5, 2, arr + '<span data-w="64">ds1.G(地区)</span>', BLACK);
cell(5, 3, arr + '<span data-w="76">ds1.G(销售员)</span>', BLACK);
cell(5, 4, arr + '<span data-w="64">ds1.G(销量)</span>', BLACK);
cell(5, 5, arr + flag + '<span data-w="88">ds2.G(销售总量)</span>', BLACK);
cell(6, 2, '<span>总计:</span>', BLACK, 1, 2);
cell(6, 4, '<span data-w="46">=SUM(C4)</span>', BLACK);
cell(6, 5, '<span data-w="46">=SUM(D4)</span>', BLACK);
cell(8, 2, T('t-chart'), V, 12, 4);

const y = v => 574.3 - v * 3.143;
let s = '';
for (let v = 0; v <= 60; v += 10)
  s += `<path d="M315.300 ${y(v)}H551.300" stroke="${v ? '#8f8f8f' : '#777'}"/><text x="312" y="${y(v) + 4}" font-size="12.500" text-anchor="end">${v}</text>`;
[315.5, 394.5, 472.5, 551.5].forEach(x => s += `<path d="M${x} 574v4" stroke="#888"/>`);
[[325,40,'gp'],[346.5,35,'gb'],[367,25,'gg'],[403.8,50,'gp'],[424.8,25,'gb'],[446,45,'gg'],[482,30,'gp'],[503.7,15,'gb'],[524.3,55,'gg']]
  .forEach(([x, v, g]) => s += `<rect x="${x}" y="${y(v)}" width="16.400" height="${v * 3.143}" fill="url(#${g})" stroke="#bcbcbc" stroke-width=".6"/>`);
[['分类名1',353.700],['分类名2',432.700],['分类名3',511]].forEach(([t, x]) => s += `<text x="${x}" y="592" font-size="12.500" text-anchor="middle">${t}</text>`);
[['系列1','#8f69b2'],['系列2','#457ca9'],['系列3','#549b66']].forEach(([t, c], i) => s += `<rect x="558" y="${466 + i * 20.500}" width="10.500" height="10.500" fill="${c}"/><text x="571.500" y="${475.500 + i * 20.500}" font-size="12.500">${t}</text>`);
sheet.querySelector('svg[viewBox="284 373 334 235"]').innerHTML = s;

let r = '<path d="M284 116h669v14H284z" fill="#fff"/><path d="M284 129.500h669M284.500 116v14" stroke="#bdbdbd" fill="none"/>';
for (let i = 0; 284.7 + i * 8.58 < 953; i++) {
  const x = Math.floor(284.7 + i * 8.58) + .5, top = i % 10 === 0 ? 116 : i % 5 === 0 ? 120 : 125;
  r += `<path d="M${x} ${top}V129" stroke="#c6c6c6"/>`;
  if (i % 10 === 0) r += `<text x="${x + 1.500}" y="124.500" font-size="8" fill="#333" font-family="Noto Sans">${i * 10}</text>`;
}
document.getElementById('ruler').innerHTML = r;

/* Fit labels to fixed-pitch widths by adjusting the tracking of their Latin runs. */
function fit(e) {
  const t = e.textContent, w = +e.dataset.w;
  e.style.whiteSpace = 'pre';
  const range = document.createRange();
  range.selectNodeContents(e);
  const nat = range.getBoundingClientRect().width;
  const latin = t.match(/[\x20-\x7e]/g) || [];
  const ls = (w - nat) / latin.length;
  e.innerHTML = t.replace(/[\x20-\x7e]+/g, m => `<span style="letter-spacing:${ls}px">${m}</span>`);
}
/* Wait for the stylesheet, since the measurements depend on it. */
(function start() {
  if (getComputedStyle(document.body).overflowX !== 'hidden') return void setTimeout(start, 5);
  document.querySelectorAll('[data-w]').forEach(fit);
})();
</script>
</body>
</html>
